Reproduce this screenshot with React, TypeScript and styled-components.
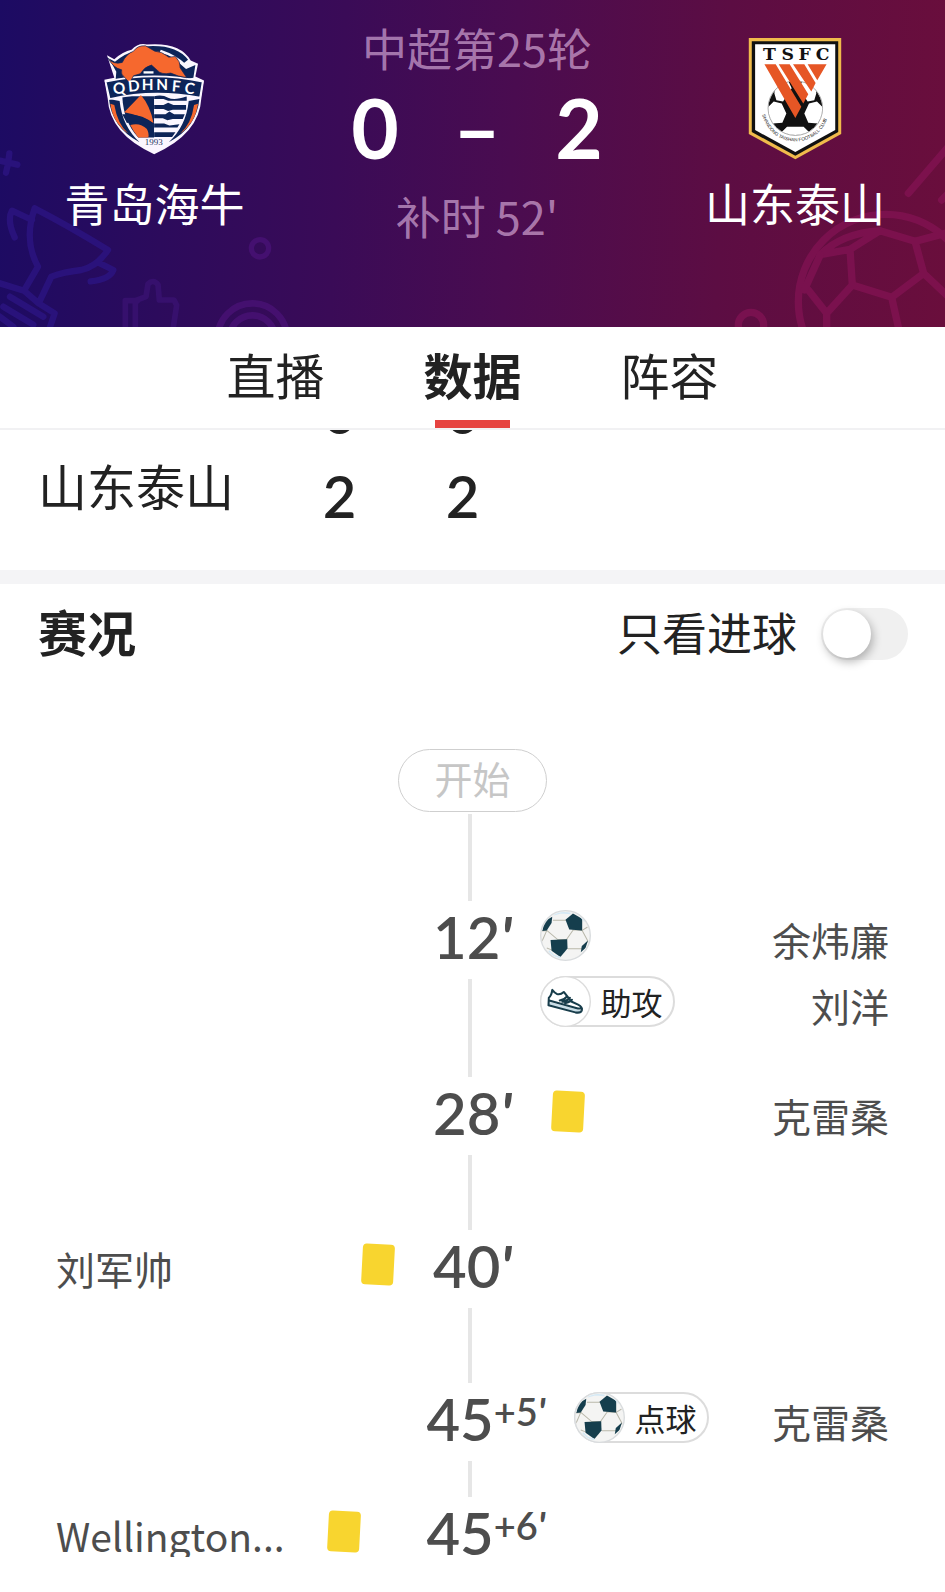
import React, { useState } from 'react';
import styled, { createGlobalStyle, css } from 'styled-components';

const cjk = '"Noto Sans CJK SC", sans-serif';
const numeric = 'Lato, "Noto Sans CJK SC", sans-serif';

const GlobalStyle = createGlobalStyle`
  *, *::before, *::after { box-sizing: border-box; }
  body { margin: 0; background: #fff; color: #222; font-family: ${cjk}; }
`;

const Page = styled.div`
  display: flex;
  flex-direction: column;
  min-height: 100vh;
  overflow: hidden;
`;

/* ---------- match header ---------- */

const Header = styled.header`
  position: relative;
  display: grid;
  grid-template-columns: 309fr 336fr 300fr;
  height: 327px;
  padding-top: 25px;
  overflow: hidden;
  color: #fff;
  background: linear-gradient(93deg, #1c0b63 0%, #2c0b5c 18%, #3a0b57 36%, #4a0c50 54%, #5c0d43 76%, #6a0e3c 100%);
`;

const Decor = styled.svg<{ $side: 'left' | 'right' }>`
  position: absolute;
  bottom: 0;
  ${(p) => p.$side}: 0;
  height: 327px;
  fill: none;
  stroke-linecap: round;
  stroke-linejoin: round;
`;

const Team = styled.div`
  position: relative;
  display: flex;
  flex-direction: column;
  align-items: center;
  padding-top: 12px;
  gap: 20px;
`;

const CrestBox = styled.div`
  display: flex;
  align-items: center;
  height: 123px;
`;

const TeamName = styled.span`
  font-size: 45px;
  line-height: 46px;
`;

const Summary = styled.div`
  position: relative;
  display: flex;
  flex-direction: column;
  align-items: center;
`;

const Muted = styled.span`
  font-size: 45px;
  line-height: 46px;
  color: rgba(232, 190, 232, 0.62);
`;

const Score = styled.div`
  display: grid;
  grid-template-columns: 48px 156px 48px;
  margin: 15px 0 25px;
  font: 700 82px/82px ${numeric};
  text-align: center;
`;

/* ---------- tabs ---------- */

const Tabs = styled.nav`
  display: flex;
  justify-content: center;
  height: 103px;
  border-bottom: 2px solid #f1f1f3;
`;

const Tab = styled.button<{ $active: boolean }>`
  display: flex;
  flex-direction: column;
  align-items: center;
  justify-content: space-between;
  width: 197px;
  padding: 21px 0 0;
  border: 0;
  background: none;
  color: #222;
  font: ${(p) => (p.$active ? 700 : 400)} 49px/52px ${cjk};
  cursor: pointer;
  &::after {
    content: '';
    width: 75px;
    height: 8px;
    background: ${(p) => (p.$active ? '#e64340' : 'transparent')};
  }
`;

/* ---------- score table ---------- */

const TableClip = styled.section`
  height: 154px;
  overflow: hidden;
  border-bottom: 14px solid #f4f4f6;
`;

const ScoreTable = styled.table`
  margin-top: -65px;
  border-collapse: collapse;
  tr { height: 84px; }
  th, td { padding: 0; }
  th {
    width: 278px;
    padding: 0 0 12px 38px;
    text-align: left;
    font-weight: 400;
    font-size: 49px;
    line-height: 70px;
  }
  td {
    width: 123px;
    padding-top: 10px;
    text-align: center;
    font: 600 58px/72px ${numeric};
  }
`;

/* ---------- timeline ---------- */

const SectionHead = styled.div`
  display: flex;
  align-items: center;
  justify-content: space-between;
  height: 100px;
  padding: 0 37px 0 38px;
`;

const SectionTitle = styled.h2`
  margin: 0;
  font-size: 49px;
  line-height: 52px;
  padding-bottom: 6px;
`;

const SwitchLabel = styled.label`
  display: flex;
  align-items: center;
  gap: 24px;
  font-size: 45px;
  line-height: 52px;
  cursor: pointer;
  span { padding-bottom: 4px; }
`;

const Switch = styled.input`
  appearance: none;
  display: flex;
  align-items: center;
  width: 87px;
  height: 52px;
  margin: 0;
  padding: 2px;
  border-radius: 26px;
  background: #f0f0f0;
  cursor: pointer;
  &::before {
    content: '';
    width: 48px;
    height: 48px;
    border-radius: 50%;
    background: #fff;
    box-shadow: 2px 4px 10px rgba(0, 0, 0, 0.28);
  }
  &:checked { background: #e64340; justify-content: flex-end; }
`;

const Timeline = styled.section`
  display: flex;
  flex-direction: column;
  align-items: stretch;
  padding-top: 65px;
`;

const StartPill = styled.div`
  align-self: center;
  width: 149px;
  height: 63px;
  border: 1px solid #cfcfcf;
  border-radius: 32px;
  margin-bottom: 2px;
  color: #c6c6c6;
  font-size: 38px;
  line-height: 56px;
  text-align: center;
`;

const Connector = styled.div<{ $length: number }>`
  align-self: center;
  width: 4px;
  height: ${(p) => p.$length}px;
  margin-right: 6px;
  background: #e6e6e6;
`;

const Event = styled.article`
  display: grid;
  grid-template-columns: minmax(0, 1fr) auto minmax(0, 1fr);
`;

const Centre = styled.div`
  display: flex;
  flex-direction: column;
`;

const Time = styled.time<{ $stoppage: boolean }>`
  display: flex;
  justify-content: ${(p) => (p.$stoppage ? 'flex-end' : 'center')};
  align-items: flex-start;
  width: ${(p) => (p.$stoppage ? 152 : 84)}px;
  height: 78px;
  padding-right: ${(p) => (p.$stoppage ? 3 : 0)}px;
  color: #4d4d4d;
  font: 600 58px/72px ${numeric};
`;

const Extra = styled.span`
  font-size: 38px;
  line-height: 56px;
`;

const Prime = styled.span`
  font-style: italic;
  font-weight: 700;
`;

const Side = styled.div<{ $home?: boolean }>`
  display: flex;
  flex-direction: column;
  gap: 15px;
  height: 78px;
  padding-top: 9px;
  ${(p) => (p.$home ? css`padding-left: 56px; padding-right: 24px;` : css`padding-left: 25px; padding-right: 56px;`)}
`;

const Incident = styled.div<{ $home?: boolean }>`
  display: flex;
  flex: none;
  flex-direction: ${(p) => (p.$home ? 'row-reverse' : 'row')};
  justify-content: space-between;
  align-items: flex-end;
  height: 51px;
`;

const Name = styled.span`
  overflow: hidden;
  color: #4d4d4d;
  font-size: 39px;
  line-height: 44px;
  white-space: nowrap;
`;

const CardSlot = styled.span`
  display: flex;
  justify-content: center;
  align-items: center;
  width: 57px;
  height: 51px;
`;

const Badge = styled.span`
  display: flex;
  align-items: center;
  height: 51px;
  border: 2px solid #dcdcdc;
  border-radius: 26px;
  background: #fff;
  padding-right: 10px;
  color: #222;
  font-size: 31px;
  line-height: 44px;
  gap: 10px;
  svg { margin: -2px 0 -2px -2px; }
`;

/* ---------- drawings ---------- */

const BallIcon = () => (
  <svg width="51" height="51" viewBox="0 0 150 150" aria-hidden="true">
    <defs>
      <clipPath id="ballClip"><circle cx="75" cy="75" r="70" /></clipPath>
    </defs>
    <circle cx="75" cy="75" r="73" fill="#f4f4f3" stroke="#d9dcde" strokeWidth="4" />
    <g clipPath="url(#ballClip)">
      <path d="M38 30H80M80 32 98 58 78 87 52 87 20 60M98 58 124 60M124 60 141 92 122 114 82 114M20 60 6 92M36 118 20 112M4 62 22 60M124 60 140 50" fill="none" stroke="#b9b8ab" strokeWidth="3" />
      <path d="M75 29 97 10 124 26 124 60 86 57Z" fill="#153e4d" />
      <path d="M31 88 80 86 81 113 60 138 34 120Z" fill="#153e4d" />
      <path d="M14 32 36 20 34 38 20 60 6 62Z" fill="#153e4d" />
      <path d="M141 90 134 112 120 124 123 106Z" fill="#153e4d" />
      <path d="M40 14 62 8 90 10M120 20 132 34M26 120 40 134 60 140" fill="none" stroke="#d5e9f5" strokeWidth="5" />
    </g>
  </svg>
);

const BootIcon = () => (
  <svg width="51" height="51" viewBox="0 0 150 150" aria-hidden="true">
    <circle cx="75" cy="75" r="73" fill="#fff" stroke="#dcdcdc" strokeWidth="4" />
    <path d="M26 76 108 98Q124 98 121 107L108 108 26 88Z" fill="#c9dde6" />
    <path d="M36 41Q34 58 26 64L25 86 104 107Q120 110 123 101 126 91 112 84L92 75 70 47Q60 56 50 53 44 51 36 41ZM27 72 106 94Q116 97 123 95M58 72Q72 70 80 59M74 80Q86 78 94 70M66 76Q80 74 88 64" fill="none" stroke="#183d4b" strokeWidth="6" strokeLinejoin="round" strokeLinecap="round" />
  </svg>
);

const CardIcon = () => (
  <svg width="36" height="44" viewBox="0 0 36 44" aria-label="黄牌" role="img">
    <rect x="2" y="1" width="32" height="41" rx="4" fill="#f8d52f" transform="rotate(3 18 22)" />
  </svg>
);

const QingdaoCrest = () => (
  <svg width="103" height="115" viewBox="40 40 310 345" role="img" aria-label="青岛海牛">
    <path d="M52 82 74 94 Q100 72 126 66 Q146 44 172 50 Q272 42 304 98 L326 108 318 146 344 158 336 212 Q330 320 194 380 Q60 320 54 212 L44 156 74 150Z" fill="#fbf6ff" />
    <path d="M58 92 76 102 Q106 76 136 70 Q152 54 174 55 Q262 50 296 96 L276 112 290 124 318 112 312 150 290 154 78 158 80 132Z" fill="#0d2458" />
    <path d="M214 66Q262 82 292 112L276 112Q252 84 210 74Z" fill="#fbf6ff" />
    <path d="M58 214 90 220 Q98 296 150 344 Q66 300 58 214Z" fill="#0d2458" />
    <path d="M330 214 298 220 Q290 296 238 344 Q322 300 330 214Z" fill="#0d2458" />
    <path d="M62 228 74 232 Q84 290 116 318 Q70 286 62 228ZM326 228 314 232 Q306 290 272 318 Q318 286 326 228Z" fill="#f6682e" />
    <path d="M98 206H194V330H146Q102 284 98 206Z" fill="#0d2458" />
    <path d="M194 200H296Q290 282 246 330H194Z" fill="#fbf6ff" />
    <path d="M194 206Q218 200 236 210T292 206V219H236L222 214H194ZM194 232H222L236 225 252 232H290V246H250L236 250 222 244H194ZM194 260H228L240 252 254 260H286L280 274H250L234 278 220 272H194ZM194 288H224L240 294 270 290 264 300H194ZM194 314H258L248 328H194Z" fill="#0d2458" />
    <path d="M154 202Q182 234 192 286Q150 262 104 254Z" fill="#f6682e" />
    <path d="M122 292Q152 284 172 304 180 318 176 330H146Q132 312 122 292Z" fill="#f6682e" />
    <path d="M98 260Q160 256 194 290V300Q158 274 112 286Z" fill="#0d2458" />
    <path d="M48 162Q194 130 340 162L332 210Q194 184 60 214Z" fill="#0d2458" stroke="#fbf6ff" strokeWidth="5" />
    <path d="M54 90Q70 112 98 104 Q110 78 132 70 Q144 52 168 54 L196 70 Q216 70 238 88 L258 86 Q274 102 272 120 L292 150 Q264 146 244 136 Q216 142 204 128 L186 112 Q166 116 152 138 L132 144 120 166 106 150 Q92 140 96 126 Q72 122 54 90Z" fill="#f6682e" stroke="#0d2458" strokeWidth="2" />
    <g fill="#fff" fontFamily="Lato, sans-serif" fontWeight="700" fontSize="46" textAnchor="middle">
      <text x="91" y="198" transform="rotate(-8 91 198)">Q</text>
      <text x="134" y="191" transform="rotate(-5 134 191)">D</text>
      <text x="174" y="186">H</text>
      <text x="218" y="187">N</text>
      <text x="259" y="192" transform="rotate(5 259 192)">F</text>
      <text x="299" y="198" transform="rotate(8 299 198)">C</text>
    </g>
    <path d="M162 134H192" stroke="#fff" strokeWidth="7" />
    <text x="193" y="351" fill="#26365f" fontFamily="Liberation Serif, serif" fontSize="27" textAnchor="middle">1993</text>
  </svg>
);

const TaishanCrest = () => (
  <svg width="94" height="123" viewBox="55 52 282 370" role="img" aria-label="山东泰山">
    <defs>
      <path id="crestArc" d="M97 286Q122 364 198 366 276 362 298 282" />
      <clipPath id="crestBall"><circle cx="197" cy="266" r="81" /></clipPath>
    </defs>
    <path d="M57 55H335V344L197 420 57 344Z" fill="#f0bb4c" />
    <path d="M66 65H326V338L197 409 66 338Z" fill="#111" />
    <path d="M76 74H317V332L197 398 76 332Z" fill="#fff" />
    <circle cx="197" cy="266" r="82" fill="#fff" stroke="#777" strokeWidth="2" />
    <g clipPath="url(#crestBall)">
      <circle cx="197" cy="266" r="81" fill="#111" />
      <path d="M112 266 132 246 156 252 170 282 158 310 128 312 108 296ZM282 266 262 246 238 252 224 282 236 310 266 312 286 296ZM172 322H222L238 338 226 352H168L156 338ZM134 222 138 180H174L186 206 160 246 140 242ZM260 222 256 180H220L208 206 234 246 254 242Z" fill="#fff" />
    </g>
    <path d="M104 134H138L215 262 197 296Z M147 134H180L236 224 221 252Z M190 134H224L258 190 245 216Z M234 134H291L263 182Z" fill="#e65625" />
    <g fill="#111" fontFamily="DejaVu Serif, serif" fontWeight="700" fontSize="52" textAnchor="middle">
      <text x="119" y="120">T</text>
      <text x="174" y="120">S</text>
      <text x="225" y="120">F</text>
      <text x="279" y="120">C</text>
    </g>
    <text fontFamily="Liberation Sans, sans-serif" fontSize="14" fill="#222">
      <textPath href="#crestArc">SHANDONG TAISHAN FOOTBALL CLUB</textPath>
    </text>
  </svg>
);

const HeaderDecor = () => (
  <>
    <Decor $side="left" viewBox="0 0 900 981" aria-hidden="true">
      <g stroke="#2c1482" strokeWidth="19" opacity="0.8">
        <path d="M28 460Q26 490 18 518M0 482 52 494" />
        <path d="M104 625Q210 680 324 750 Q290 800 244 810 Q190 816 154 830 L116 910 164 940 150 981M104 625Q70 720 114 800L72 872 0 850M96 660 36 632Q20 660 44 712M300 790 340 810Q330 838 272 844M72 872 116 910M30 890 130 950M10 920 100 974M0 950 40 980" />
      </g>
      <g stroke="#3a1172" strokeWidth="17" opacity="0.8">
        <path d="M376 981V902H412M406 981V902L438 890 444 852Q460 836 474 854L478 900H522L530 916 520 981" />
      </g>
      <g stroke="#491275" strokeWidth="16" opacity="0.8">
        <circle cx="780" cy="745" r="26" />
        <circle cx="757" cy="1014" r="104" strokeWidth="20" />
        <circle cx="757" cy="1014" r="68" strokeWidth="20" />
      </g>
    </Decor>
    <Decor $side="right" viewBox="720 0 720 981" aria-hidden="true">
      <g stroke="#8a1458" strokeWidth="22" opacity="0.6">
        <path d="M1330 580 1450 440M1430 600 1450 580" />
        <circle cx="1262" cy="905" r="262" />
        <path d="M1245 692 1155 748 1162 855 1280 892 1376 820 1350 724ZM1155 748 1066 764M1066 764Q1130 700 1245 692M1350 724 1440 700M1030 870 1085 940 1162 855M1085 940V990M1280 892 1302 990M1376 820 1450 890" />
        <path d="M1066 764 1018 870" />
        <circle cx="858" cy="975" r="38" />
      </g>
    </Decor>
  </>
);

/* ---------- data ---------- */

type Kind = 'goal' | 'assist' | 'penalty' | 'yellow';
type MatchEvent = {
  minute: string;
  extra?: string;
  home?: boolean;
  after?: number;
  incidents: { kind: Kind; player: string }[];
};

const events: MatchEvent[] = [
  { minute: '12', after: 98, incidents: [{ kind: 'goal', player: '余炜廉' }, { kind: 'assist', player: '刘洋' }] },
  { minute: '28', after: 75, incidents: [{ kind: 'yellow', player: '克雷桑' }] },
  { minute: '40', after: 75, home: true, incidents: [{ kind: 'yellow', player: '刘军帅' }] },
  { minute: '45', extra: '+5', after: 36, incidents: [{ kind: 'penalty', player: '克雷桑' }] },
  { minute: '45', extra: '+6', home: true, incidents: [{ kind: 'yellow', player: 'Wellington...' }] },
];

const tabs = ['直播', '数据', '阵容'];

const Marker = ({ kind }: { kind: Kind }) => {
  if (kind === 'goal') return <BallIcon />;
  if (kind === 'assist') return <Badge><BootIcon />助攻</Badge>;
  if (kind === 'penalty') return <Badge><BallIcon />点球</Badge>;
  return <CardSlot><CardIcon /></CardSlot>;
};

const EventRow = ({ event }: { event: MatchEvent }) => {
  const side = (
    <Side $home={event.home}>
      {event.incidents.map((item) => (
        <Incident key={item.player} $home={event.home}>
          <Marker kind={item.kind} />
          <Name>{item.player}</Name>
        </Incident>
      ))}
    </Side>
  );
  return (
    <Event>
      {event.home ? side : <span />}
      <Centre>
        <Time $stoppage={Boolean(event.extra)}>
          {event.minute}
          {event.extra ? <Extra>{event.extra}<Prime>'</Prime></Extra> : <Prime>'</Prime>}
        </Time>
        {event.after && <Connector $length={event.after} />}
      </Centre>
      {event.home ? <span /> : side}
    </Event>
  );
};

export default function App() {
  const [active, setActive] = useState('数据');
  const [goalsOnly, setGoalsOnly] = useState(false);
  const shown = goalsOnly
    ? events.filter((e) => e.incidents.some((i) => i.kind === 'goal' || i.kind === 'penalty'))
    : events;

  return (
    <Page>
      <GlobalStyle />
      <Header>
        <HeaderDecor />
        <Team>
          <CrestBox><QingdaoCrest /></CrestBox>
          <TeamName>青岛海牛</TeamName>
        </Team>
        <Summary>
          <Muted>中超第25轮</Muted>
          <Score><span>0</span><span>–</span><span>2</span></Score>
          <Muted>补时 52'</Muted>
        </Summary>
        <Team>
          <CrestBox><TaishanCrest /></CrestBox>
          <TeamName>山东泰山</TeamName>
        </Team>
      </Header>
      <Tabs>
        {tabs.map((tab) => (
          <Tab key={tab} type="button" $active={tab === active} onClick={() => setActive(tab)}>{tab}</Tab>
        ))}
      </Tabs>
      <TableClip>
        <ScoreTable>
          <tbody>
            <tr><th scope="row">青岛海牛</th><td>0</td><td>0</td></tr>
            <tr><th scope="row">山东泰山</th><td>2</td><td>2</td></tr>
          </tbody>
        </ScoreTable>
      </TableClip>
      <SectionHead>
        <SectionTitle>赛况</SectionTitle>
        <SwitchLabel>
          <span>只看进球</span>
          <Switch type="checkbox" checked={goalsOnly} onChange={(e) => setGoalsOnly(e.target.checked)} />
        </SwitchLabel>
      </SectionHead>
      <Timeline>
        <StartPill>开始</StartPill>
        <Connector $length={87} />
        {shown.map((event) => <EventRow key={event.minute + (event.extra ?? '')} event={event} />)}
      </Timeline>
    </Page>
  );
}
